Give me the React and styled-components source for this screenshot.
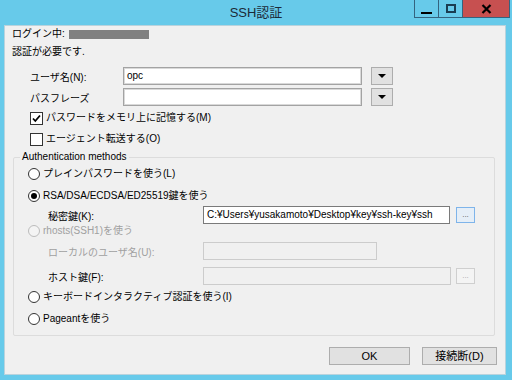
import React from 'react';
import styled, { createGlobalStyle } from 'styled-components';

const GlobalStyle = createGlobalStyle`
  html, body {
    margin: 0;
    padding: 0;
    background: #ffffff;
  }
  body {
    font-family: "Liberation Sans", "Noto Sans CJK JP", sans-serif;
    font-size: 10px;
    color: #000;
  }
`;

const Window = styled.div`
  width: 512px;
  height: 380px;
  box-sizing: border-box;
  background: #67caea;
  padding: 0 6px 5px 4px;
  display: flex;
  flex-direction: column;
`;

const TitleBar = styled.div`
  height: 25px;
  margin: 0 -6px 0 -4px;
  display: grid;
  grid-template-columns: 1fr auto 1fr;
  align-items: start;
`;

const TitleText = styled.div`
  grid-column: 2;
  font-size: 13px;
  line-height: 25px;
  color: #1b2a38;
`;

const Caption = styled.div`
  grid-column: 3;
  justify-self: end;
  display: flex;
  margin-right: 2px;
`;

const CaptionButton = styled.div`
  width: ${p => p.w}px;
  height: 18px;
  box-sizing: border-box;
  border: 1px solid #34637f;
  border-top: none;
  border-left: ${p => (p.first ? '1px solid #34637f' : 'none')};
  background: ${p => (p.close ? '#c75050' : '#67caea')};
  display: flex;
  align-items: center;
  justify-content: center;
`;

const Panel = styled.div`
  flex: 1;
  background: #f0f0f0;
  box-sizing: border-box;
  border: 1px solid #b9d3dd;
  padding: 1px 5px 9px 7px;
  display: flex;
  flex-direction: column;
`;

const Line = styled.div`
  height: 14px;
  line-height: 14px;
  display: flex;
  align-items: center;
  margin-top: ${p => p.mt || 0}px;
  padding-left: ${p => p.indent || 0}px;
  color: ${p => (p.disabled ? '#a0a0a0' : '#000')};
  white-space: nowrap;
`;

const Masked = styled.span`
  width: 80px;
  height: 9px;
  background: #808080;
  margin-left: 4px;
`;

const FieldRow = styled.div`
  height: 18px;
  display: flex;
  align-items: center;
  margin-top: ${p => p.mt || 0}px;
  padding-left: ${p => p.indent || 0}px;
`;

const FieldLabel = styled.span`
  width: ${p => p.w}px;
  flex: none;
  color: ${p => (p.disabled ? '#a0a0a0' : '#000')};
  white-space: nowrap;
`;

const TextBox = styled.div`
  width: ${p => p.w}px;
  height: 18px;
  box-sizing: border-box;
  flex: none;
  background: ${p => (p.disabled ? '#f0f0f0' : '#fff')};
  border: 1px solid ${p => (p.disabled ? '#cccccc' : p.dark ? '#7a7a7a' : '#a3a3a3')};
  box-shadow: ${p => (p.disabled || p.dark ? 'none' : 'inset 0 0 0 1px #d9d9d9')};
  padding: 0 3px;
  line-height: 16px;
  overflow: hidden;
  white-space: nowrap;
`;

const DropButton = styled.div`
  width: 22px;
  height: 18px;
  box-sizing: border-box;
  margin-left: 9px;
  background: #e1e1e1;
  border: 1px solid #adadad;
  display: flex;
  align-items: center;
  justify-content: center;
  &::after {
    content: '';
    border-left: 4px solid transparent;
    border-right: 4px solid transparent;
    border-top: 4px solid #000;
  }
`;

const BrowseButton = styled.div`
  width: 19px;
  height: 16px;
  box-sizing: border-box;
  margin-left: ${p => p.ml}px;
  background: ${p => (p.disabled ? '#f4f4f4' : '#e5eef7')};
  border: 1px solid ${p => (p.disabled ? '#cfcfcf' : '#7eb4ea')};
  color: ${p => (p.disabled ? '#a8a8a8' : '#555')};
  font-size: 8px;
  line-height: 14px;
  text-align: center;
`;

const CheckBox = styled.span`
  width: 13px;
  height: 13px;
  box-sizing: border-box;
  flex: none;
  border: 1px solid #333;
  background: #fff;
  margin-right: 3px;
  display: flex;
  align-items: center;
  justify-content: center;
`;

const Radio = styled.span`
  width: 12px;
  height: 12px;
  box-sizing: border-box;
  flex: none;
  border-radius: 50%;
  border: 1px solid ${p => (p.disabled ? '#bcbcbc' : '#333')};
  background: ${p => (p.disabled ? '#f4f4f4' : '#fff')};
  margin-right: 3px;
  display: flex;
  align-items: center;
  justify-content: center;
  &::after {
    content: '';
    display: ${p => (p.checked ? 'block' : 'none')};
    width: 6px;
    height: 6px;
    border-radius: 50%;
    background: #000;
  }
`;

const Group = styled.fieldset`
  margin: 4px 5px 0 1px;
  padding: 0 0 9px 6px;
  border: 1px solid #dcdcdc;
  border-radius: 2px;
  min-inline-size: auto;
`;

const Legend = styled.legend`
  padding: 0 2px;
  height: 14px;
  line-height: 14px;
`;

const Footer = styled.div`
  display: flex;
  justify-content: flex-end;
  gap: 12px;
  margin: 11px 3px 0 0;
`;

const PushButton = styled.div`
  width: ${p => p.w}px;
  height: 18px;
  box-sizing: border-box;
  background: #e1e1e1;
  border: 1px solid #adadad;
  text-align: center;
  line-height: 16px;
  font-size: 11px;
`;

const Check = () => (
  <svg width="11" height="11" viewBox="0 0 11 11">
    <path d="M2 5.5 L4.3 8 L9 2.5" fill="none" stroke="#000" strokeWidth="1.8" />
  </svg>
);

export default function App() {
  return (
    <>
      <GlobalStyle />
      <Window>
        <TitleBar>
          <TitleText>SSH認証</TitleText>
          <Caption>
            <CaptionButton w={25} first>
              <svg width="11" height="12" viewBox="0 0 11 12">
                <rect x="0" y="9" width="11" height="2" fill="#000" />
              </svg>
            </CaptionButton>
            <CaptionButton w={24}>
              <svg width="10" height="9" viewBox="0 0 10 9">
                <rect x="1" y="1" width="8" height="7" fill="none" stroke="#1a3d52" strokeWidth="2" />
              </svg>
            </CaptionButton>
            <CaptionButton w={47} close>
              <svg width="11" height="10" viewBox="0 0 11 10">
                <path d="M1.5 1 L9.5 9 M9.5 1 L1.5 9" stroke="#000" strokeWidth="2.2" />
              </svg>
            </CaptionButton>
          </Caption>
        </TitleBar>
        <Panel>
          <Line>
            ログイン中:
            <Masked />
          </Line>
          <Line mt={4}>認証が必要です.</Line>
          <FieldRow mt={8} indent={18}>
            <FieldLabel w={93}>ユーザ名(N):</FieldLabel>
            <TextBox w={239}>opc</TextBox>
            <DropButton />
          </FieldRow>
          <FieldRow mt={3} indent={18}>
            <FieldLabel w={93}>パスフレーズ</FieldLabel>
            <TextBox w={239} />
            <DropButton />
          </FieldRow>
          <Line mt={5} indent={18}>
            <CheckBox>
              <Check />
            </CheckBox>
            パスワードをメモリ上に記憶する(M)
          </Line>
          <Line mt={7} indent={18}>
            <CheckBox />
            エージェント転送する(O)
          </Line>
          <Group>
            <Legend>Authentication methods</Legend>
            <Line mt={3} indent={8}>
              <Radio />
              プレインパスワードを使う(L)
            </Line>
            <Line mt={8} indent={8}>
              <Radio checked />
              RSA/DSA/ECDSA/ED25519鍵を使う
            </Line>
            <FieldRow mt={3} indent={28}>
              <FieldLabel w={155}>秘密鍵(K):</FieldLabel>
              <TextBox w={247} dark>
                C:¥Users¥yusakamoto¥Desktop¥key¥ssh-key¥ssh
              </TextBox>
              <BrowseButton ml={6}>...</BrowseButton>
            </FieldRow>
            <Line indent={8} disabled>
              <Radio disabled />
              rhosts(SSH1)を使う
            </Line>
            <FieldRow mt={4} indent={28}>
              <FieldLabel w={155} disabled>
                ローカルのユーザ名(U):
              </FieldLabel>
              <TextBox w={174} disabled />
            </FieldRow>
            <FieldRow mt={7} indent={28}>
              <FieldLabel w={155}>ホスト鍵(F):</FieldLabel>
              <TextBox w={248} disabled />
              <BrowseButton ml={5} disabled>
                ...
              </BrowseButton>
            </FieldRow>
            <Line mt={5} indent={8}>
              <Radio />
              キーボードインタラクティブ認証を使う(I)
            </Line>
            <Line mt={8} indent={8}>
              <Radio />
              Pageantを使う
            </Line>
          </Group>
          <Footer>
            <PushButton w={81}>OK</PushButton>
            <PushButton w={75}>接続断(D)</PushButton>
          </Footer>
        </Panel>
      </Window>
    </>
  );
}
